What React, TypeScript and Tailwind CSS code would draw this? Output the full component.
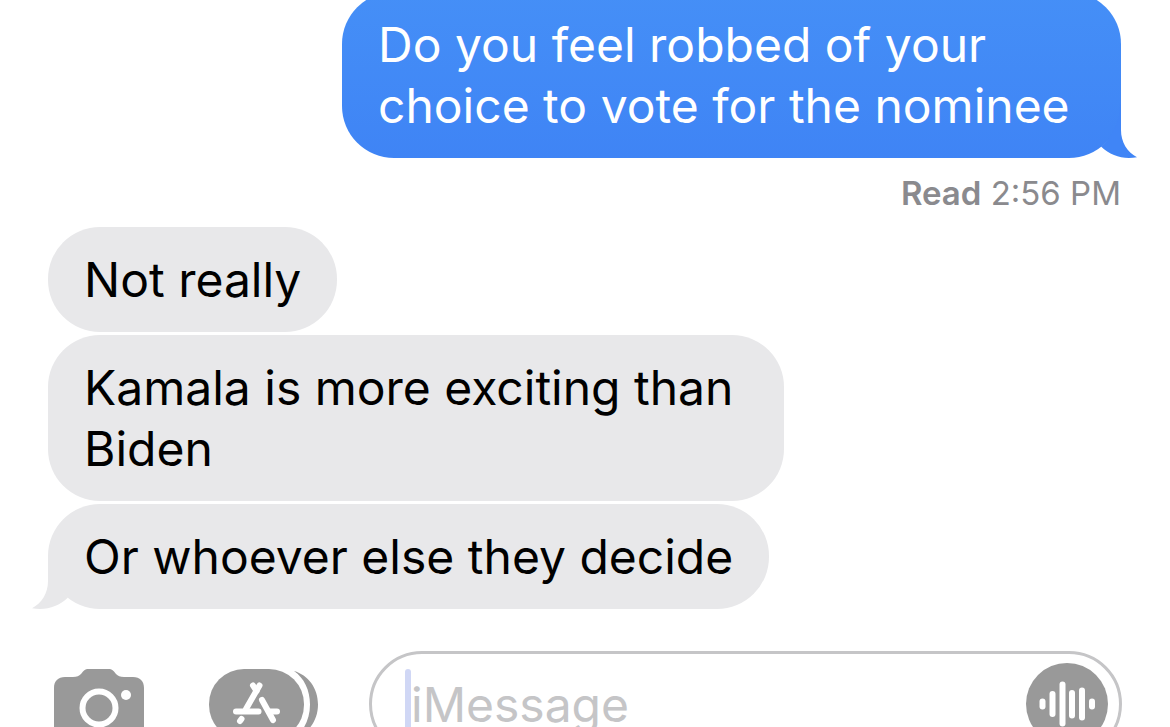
import React, { useState } from 'react';
import { clsx } from 'clsx';

interface Message {
  id: number;
  text: string;
  from: 'me' | 'them';
  tail?: boolean;
  read?: string;
}

const messages: Message[] = [
  {
    id: 1,
    text: 'Do you feel robbed of your choice to vote for the nominee',
    from: 'me',
    tail: true,
    read: '2:56 PM',
  },
  { id: 2, text: 'Not really', from: 'them' },
  { id: 3, text: 'Kamala is more exciting than Biden', from: 'them' },
  { id: 4, text: 'Or whoever else they decide', from: 'them', tail: true },
];

function Tail({ mine }: { mine: boolean }) {
  return (
    <svg
      viewBox="0 0 60 60"
      aria-hidden="true"
      className={clsx(
        'absolute bottom-0 size-15',
        mine ? '-right-4 text-[#4085f6]' : '-left-4 -scale-x-100 text-[#e8e8ea]'
      )}
    >
      <path
        d="M43 6 H44 V32 C44 44 50 54 60 59.2 C46 61.5 34 58 24 48.5 C36 38 43 24 43 6 Z"
        fill="currentColor"
      />
    </svg>
  );
}

function Bubble({ message }: { message: Message }) {
  const mine = message.from === 'me';

  return (
    <div
      className={clsx(
        'relative rounded-[52px] px-9 py-[22px] text-[48px] leading-[61px]',
        mine
          ? 'max-w-[779px] self-end bg-linear-to-b from-[#458ff7] to-[#3f84f5] text-white'
          : 'max-w-[736px] self-start bg-[#e8e8ea] text-black'
      )}
    >
      {message.text}
      {message.tail && <Tail mine={mine} />}
    </div>
  );
}

function CameraIcon() {
  return (
    <svg viewBox="0 0 90 70" className="h-[70px] w-[90px]" aria-hidden="true">
      <path
        d="M11 8 H19 C23 8 25 7 27 5 L29 2.5 C31 .5 32 0 35 0 H54 C57 0 58 .5 60 2.5 L62 5 C64 7 66 8 70 8 H79 C86 8 90 12 90 19 V59 C90 66 86 70 79 70 H11 C4 70 0 66 0 59 V19 C0 12 4 8 11 8 Z"
        fill="#999999"
      />
      <circle cx="45" cy="39" r="16.5" fill="none" stroke="white" strokeWidth="6" />
      <circle cx="72" cy="26" r="5" fill="white" />
    </svg>
  );
}

function AppsIcon() {
  return (
    <svg viewBox="0 0 110 71" className="h-[71px] w-[110px]" aria-hidden="true">
      <path d="M85 2 C99 6 109 19 109 35.5 C109 52 99 65 85 69 C95 62 101 50 101 35.5 C101 21 95 9 85 2 Z" fill="#999999" />
      <rect width="95" height="71" rx="35" fill="#999999" />
      <g stroke="white" strokeWidth="6" strokeLinecap="round" fill="none">
        <path d="M50.5 16.5 L37 40" />
        <path d="M44 16.5 L47.5 22" />
        <path d="M53 31 L64 51" />
        <path d="M27 42.5 H49.5" />
        <path d="M61 42.5 H68" />
        <path d="M32.5 50 L31 52" />
      </g>
    </svg>
  );
}

function AudioIcon() {
  return (
    <svg viewBox="0 0 82 82" className="size-[82px]" aria-hidden="true">
      <circle cx="41" cy="41" r="41" fill="#999999" />
      <g stroke="white" strokeWidth="6" strokeLinecap="round">
        <path d="M16.5 38.5 V43.5" />
        <path d="M26.5 31 V51" />
        <path d="M36.5 21.5 V60.5" />
        <path d="M46 30 V52.5" />
        <path d="M56 27.5 V54.5" />
        <path d="M66 38.5 V43.5" />
      </g>
    </svg>
  );
}

export default function App() {
  const [draft, setDraft] = useState('');

  return (
    <div className="h-screen overflow-hidden bg-white font-['Inter','Liberation_Sans',sans-serif]">
      {/* Conversation */}
      <main className="-mt-2 flex flex-col gap-[3px] pr-[49px] pl-12">
        {messages.map((message) => (
          <React.Fragment key={message.id}>
            <Bubble message={message} />
            {message.read && (
              <p className="mt-3 mb-[11px] self-end text-[33px] leading-10 text-[#8a8a8e]">
                <span className="font-semibold">Read</span> {message.read}
              </p>
            )}
          </React.Fragment>
        ))}
      </main>

      {/* Composer */}
      <form
        className="mt-[42px] flex items-center pr-12 pl-[54px]"
        onSubmit={(e) => e.preventDefault()}
      >
        <button type="button" aria-label="Camera">
          <CameraIcon />
        </button>
        <button type="button" aria-label="Apps" className="ml-[65px]">
          <AppsIcon />
        </button>
        <div className="ml-[50px] flex min-w-0 flex-1 items-center rounded-full border-3 border-[#c5c5c7] py-[9px] pr-[11px] pl-[33px]">
          <span className="h-[70px] w-[6px] shrink-0 rounded-full bg-[#d0d7f5]" />
          <input
            type="text"
            aria-label="iMessage"
            placeholder="iMessage"
            value={draft}
            onChange={(e) => setDraft(e.target.value)}
            className="h-[61px] min-w-0 flex-1 bg-transparent text-[48px] leading-[61px] outline-none placeholder:text-[#c5c5c7]"
          />
          <button type="button" aria-label="Record audio">
            <AudioIcon />
          </button>
        </div>
      </form>
    </div>
  );
}
